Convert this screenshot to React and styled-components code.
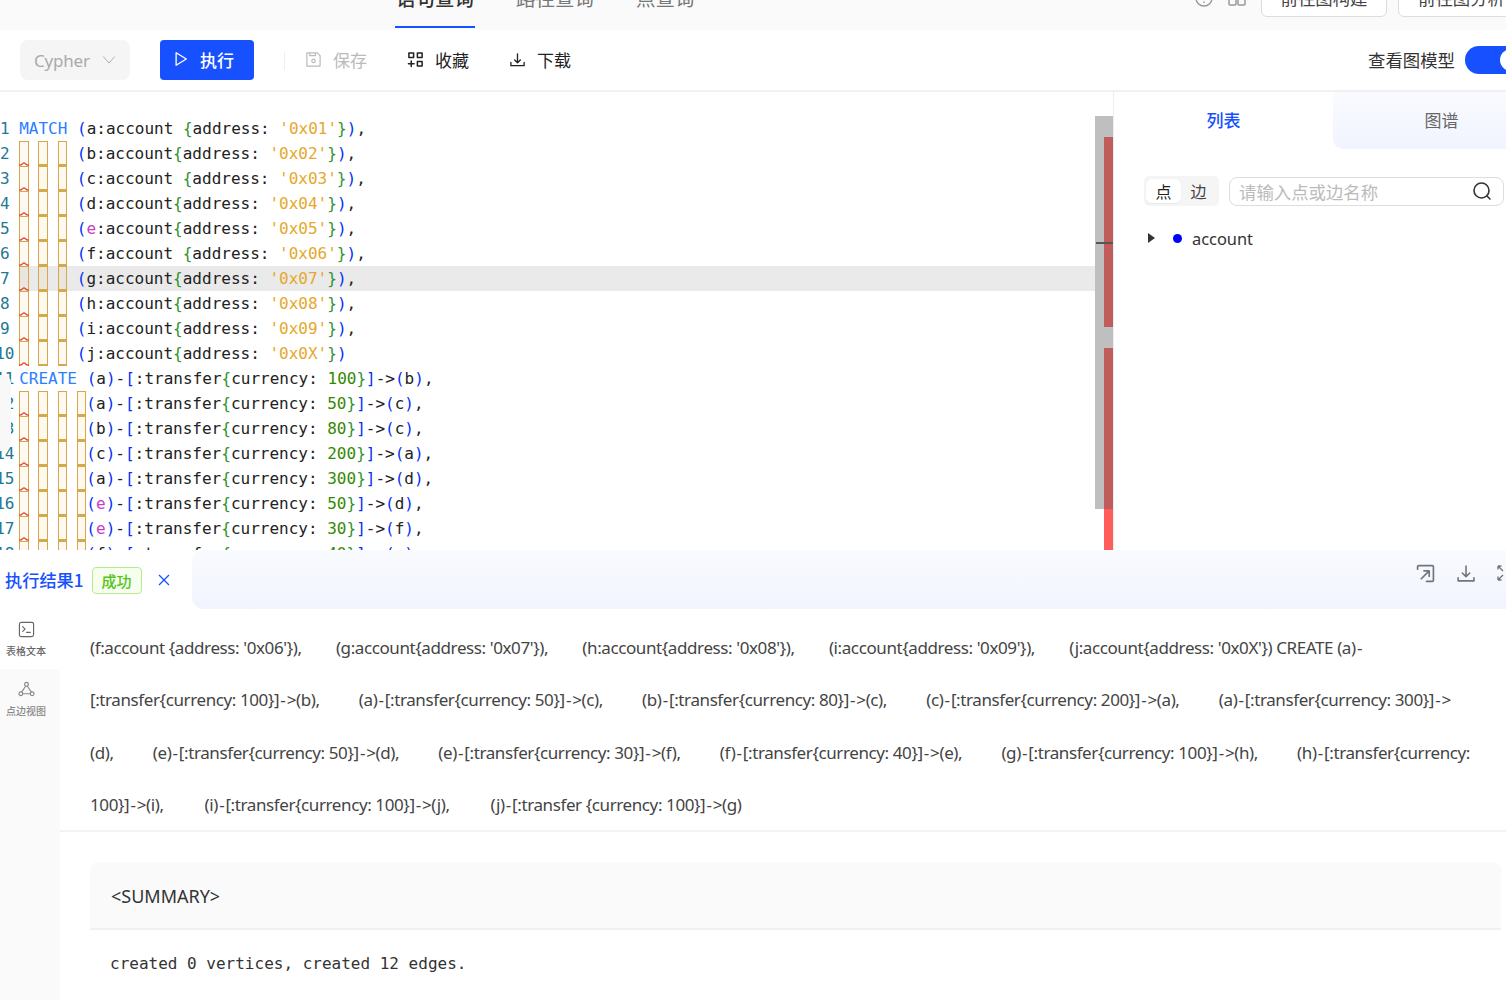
import React from 'react'
import styled, { createGlobalStyle } from 'styled-components'

const MONO = '"DejaVu Sans Mono", "Liberation Mono", monospace'
const UI = '"Noto Sans", "Noto Sans CJK SC", sans-serif'
const CJK = '"Noto Sans CJK SC", "Noto Sans", sans-serif'

const Global = createGlobalStyle`
  html, body { margin: 0; padding: 0; background: #fff; }
  * { box-sizing: border-box; }
  #root { width: 1506px; height: 1000px; overflow: hidden; font-family: ${UI}; }
`

const Page = styled.div`
  width: 1506px;
  height: 1000px;
  display: flex;
  flex-direction: column;
  overflow: hidden;
  background: #fff;
`

/* top bar, scrolled so only its lower edge is visible */
const TopBar = styled.div`
  height: 30px;
  flex: none;
  background: #fafafa;
  display: flex;
  justify-content: space-between;
  overflow: hidden;
`
const TopTabs = styled.div`
  display: flex;
  align-items: flex-start;
  gap: 40px;
  margin-left: 395px;
  margin-top: -16px;
`
const TopTab = styled.div`
  height: 44px;
  font-family: ${CJK};
  font-size: 19.5px;
  line-height: 28px;
  padding: 0 1px;
  font-weight: ${p => (p.$active ? 500 : 400)};
  color: ${p => (p.$active ? '#333' : '#777')};
  border-bottom: 2px solid ${p => (p.$active ? '#1650ff' : 'transparent')};
`
const TopActions = styled.div`
  display: flex;
  align-items: flex-start;
  margin-top: -16px;
  margin-right: -19px;
`
const TopIcon = styled.div`
  color: #999;
  margin-top: 5px;
  margin-right: 15px;
`
const TopButton = styled.div`
  height: 33px;
  width: ${p => p.$w}px;
  margin-left: ${p => p.$ml || 0}px;
  border: 1px solid #ddd;
  border-radius: 6px;
  background: #fff;
  font-family: ${CJK};
  font-size: 17.4px;
  line-height: 25px;
  text-align: center;
  color: #444;
`

const Toolbar = styled.div`
  height: 62px;
  flex: none;
  display: flex;
  align-items: center;
  padding: 0 0 2px 20px;
  border-bottom: 2px solid #f1f1f1;
  overflow: hidden;
`
const SelectBox = styled.div`
  width: 110px;
  height: 40px;
  margin-top: 2px;
  background: #f5f5f5;
  border-radius: 8px;
  display: flex;
  align-items: center;
  gap: 12px;
  padding: 0 0 0 14px;
  font-size: 17px;
  letter-spacing: -0.2px;
  color: #aaa;
`
const RunButton = styled.div`
  width: 94px;
  height: 40px;
  margin: 2px 0 0 30px;
  background: #1650ff;
  border-radius: 4px;
  color: #fff;
  display: flex;
  align-items: center;
  gap: 11px;
  padding: 0 0 2px 13px;
  font-family: ${CJK};
  font-size: 17px;
  font-weight: 500;
`
const ToolDivider = styled.div`
  width: 1px;
  height: 18px;
  margin: 4px 20px 0 30px;
  background: #eee;
`
const ToolAction = styled.div`
  display: flex;
  align-items: center;
  gap: 11px;
  margin-right: ${p => p.$mr}px;
  font-family: ${CJK};
  font-size: 17px;
  color: ${p => (p.$disabled ? '#bbb' : '#222')};
`
const ToolRight = styled.div`
  margin-left: auto;
  display: flex;
  align-items: center;
  gap: 10px;
  font-family: ${CJK};
  font-size: 17.4px;
  color: #333;
  margin-right: -19px;
`
const Switch = styled.div`
  width: 60px;
  height: 28px;
  margin-top: 2px;
  border-radius: 14px;
  background: #1650ff;
  position: relative;
  &::after {
    content: '';
    position: absolute;
    right: 3px;
    top: 3px;
    width: 22px;
    height: 22px;
    border-radius: 50%;
    background: #fff;
  }
`

const Workspace = styled.div`
  height: 458px;
  flex: none;
  display: flex;
  overflow: hidden;
`
const EditorPane = styled.div`
  width: 1113px;
  flex: none;
  position: relative;
  padding-top: 24px;
  overflow: hidden;
`
const CodeLine = styled.div`
  height: 25px;
  width: 1095px;
  display: flex;
  font-family: ${MONO};
  font-size: 16px;
  line-height: 25px;
  white-space: pre;
  color: #222;
`
const Gutter = styled.span`
  width: 9.6px;
  margin-right: 9.6px;
  flex: none;
  display: flex;
  justify-content: center;
  color: #237893;
`
const CodeBody = styled.span`
  flex: 1;
  display: flex;
  background: ${p => (p.$current ? '#eaeaea' : 'transparent')};
`
const GuideRow = styled.span`
  display: flex;
  flex: none;
  gap: 9.6px;
  padding-right: ${p => p.$pad}px;
`
const Guide = styled.span`
  position: relative;
  width: 9.6px;
  height: 25px;
  flex: none;
  background: rgba(232, 196, 110, 0.1);
  border: 1px solid #d4a84b;
  border-bottom-width: ${p => (p.$first ? 0 : 2)}px;
`
const Squiggle = styled.svg`
  position: absolute;
  left: -1px;
  bottom: 0;
`
const Token = styled.span`
  color: ${p => p.$c};
`
const GutterCover = styled.div`
  position: absolute;
  left: 0;
  top: 283px;
  width: 11px;
  height: 76px;
  background: #f8f8f8;
  border-radius: 0 8px 8px 0;
`
const ScrollTrack = styled.div`
  position: absolute;
  left: 1095px;
  top: 24px;
  width: 18px;
  height: 393px;
  background: #bfbfbf;
`
const ScrollMark = styled.div`
  position: absolute;
  left: 1104px;
  top: ${p => p.$top}px;
  width: 9px;
  height: ${p => p.$h}px;
  background: ${p => p.$c};
`
const ScrollTick = styled.div`
  position: absolute;
  left: 1096px;
  top: 150px;
  width: 17px;
  height: 2px;
  background: #555;
`

const SidePane = styled.div`
  flex: 1;
  border-left: 1px solid #eee;
  display: flex;
  flex-direction: column;
  overflow: hidden;
`
const SideTabs = styled.div`
  height: 57px;
  display: flex;
  flex: none;
`
const SideTab = styled.div`
  width: ${p => p.$w}px;
  flex: none;
  display: flex;
  align-items: center;
  justify-content: center;
  padding-bottom: 3px;
  font-family: ${CJK};
  font-size: 17px;
  font-weight: ${p => (p.$active ? 500 : 400)};
  color: ${p => (p.$active ? '#1650ff' : '#666')};
  background: ${p => (p.$active ? '#fff' : 'linear-gradient(180deg, #fafbff, #f1f4fe)')};
  border-radius: ${p => (p.$active ? '0' : '0 0 0 10px')};
`
const FilterRow = styled.div`
  display: flex;
  align-items: center;
  gap: 10px;
  margin: 27px 0 0 30px;
`
const Segmented = styled.div`
  width: 75px;
  height: 30px;
  background: #f5f5f5;
  border-radius: 5px;
  display: flex;
  padding: 3px 2px;
`
const Segment = styled.div`
  width: 35px;
  display: flex;
  align-items: center;
  justify-content: center;
  border-radius: 6px;
  font-family: ${CJK};
  font-size: 16px;
  color: ${p => (p.$active ? '#222' : '#444')};
  background: ${p => (p.$active ? '#fff' : 'transparent')};
  box-shadow: ${p => (p.$active ? '0 1px 2px rgba(0,0,0,.06)' : 'none')};
`
const SearchBox = styled.div`
  width: 275px;
  height: 29px;
  border: 1px solid #ddd;
  border-radius: 8px;
  display: flex;
  align-items: center;
  justify-content: space-between;
  padding: 0 11px 0 9px;
  font-family: ${CJK};
  font-size: 17.4px;
  color: #bbb;
`
const TreeRow = styled.div`
  display: flex;
  align-items: center;
  margin: 19px 0 0 34px;
  font-size: 16.4px;
  line-height: 26px;
  color: #333;
`
const TreeLabel = styled.span`
  position: relative;
  top: 1px;
`
const Dot = styled.span`
  width: 9px;
  height: 9px;
  border-radius: 50%;
  background: #0000ff;
  margin: 0 10px 0 18px;
`
const Caret = styled.span`
  width: 0;
  height: 0;
  border-left: 7px solid #333;
  border-top: 5px solid transparent;
  border-bottom: 5px solid transparent;
`

const ResultTabs = styled.div`
  height: 59px;
  flex: none;
  display: flex;
  background: #fff;
  position: relative;
`
const ResultTab = styled.div`
  width: 192px;
  flex: none;
  display: flex;
  align-items: center;
  padding: 0 0 1px 5px;
  font-family: ${CJK};
  font-size: 17.2px;
  font-weight: 500;
  color: #1650ff;
`
const SuccessTag = styled.span`
  width: 50px;
  height: 27px;
  margin: 2px 0 0 8px;
  display: flex;
  align-items: center;
  justify-content: center;
  border: 1px solid #b7eb8f;
  border-radius: 4px;
  background: #f6ffed;
  color: #52c41a;
  font-size: 15px;
`
const CloseMark = styled.span`
  margin: 1px 0 0 15px;
  display: flex;
`
const ResultBar = styled.div`
  flex: 1;
  display: flex;
  justify-content: flex-end;
  align-items: flex-start;
  padding: 14px 2px 0 0;
  background: linear-gradient(180deg, #fafbff, #f1f4fe);
  border-radius: 12px 0 0 12px;
  color: #71757f;
  & > svg + svg {
    margin-left: 21px;
  }
`
const ClippedExpand = styled.svg`
  margin-left: 22px !important;
`

const ResultBody = styled.div`
  flex: 1;
  display: flex;
  min-height: 0;
`
const SideNav = styled.div`
  width: 60px;
  flex: none;
  background: #fafafa;
  display: flex;
  flex-direction: column;
`
const NavItem = styled.div`
  height: 60px;
  display: flex;
  flex-direction: column;
  align-items: center;
  padding: 12px 8px 0 0;
  background: ${p => (p.$active ? '#fff' : 'transparent')};
  font-family: ${CJK};
  font-size: 10px;
  line-height: 14px;
  font-weight: 500;
  color: ${p => (p.$active ? '#666' : '#888')};
  gap: 6px;
`
const ResultMain = styled.div`
  flex: 1;
  min-width: 0;
`
const ResultText = styled.div`
  height: 223px;
  padding: 13px 0 0 30px;
  border-bottom: 2px solid #f3f3f3;
`
const TextRow = styled.div`
  height: 52.4px;
  display: flex;
  gap: ${p => p.$gap}px;
  font-size: 17px;
  letter-spacing: -0.4px;
  line-height: 52px;
  color: #444;
  white-space: nowrap;
`
const Hyphen = styled.span`
  padding: 0 1.2px;
`
const SummaryHead = styled.div`
  width: 1411px;
  height: 68px;
  margin: 30px 0 0 30px;
  padding-left: 21px;
  background: #fafafa;
  border-radius: 8px 8px 0 0;
  border-bottom: 2px solid #f0f0f0;
  font-size: 18px;
  line-height: 68px;
  color: #333;
`
const SummaryBody = styled.div`
  margin: 21px 0 0 50px;
  font-family: ${MONO};
  font-size: 16px;
  line-height: 26px;
  color: #333;
  white-space: pre;
`

const CODE = [
  "(a:account {address: '0x01'}),",
  "(b:account{address: '0x02'}),",
  "(c:account {address: '0x03'}),",
  "(d:account{address: '0x04'}),",
  "(e:account{address: '0x05'}),",
  "(f:account {address: '0x06'}),",
  "(g:account{address: '0x07'}),",
  "(h:account{address: '0x08'}),",
  "(i:account{address: '0x09'}),",
  "(j:account{address: '0x0X'})",
  "(a)-[:transfer{currency: 100}]->(b),",
  "(a)-[:transfer{currency: 50}]->(c),",
  "(b)-[:transfer{currency: 80}]->(c),",
  "(c)-[:transfer{currency: 200}]->(a),",
  "(a)-[:transfer{currency: 300}]->(d),",
  "(e)-[:transfer{currency: 50}]->(d),",
  "(e)-[:transfer{currency: 30}]->(f),",
  "(f)-[:transfer{currency: 40}]->(e),",
]

const RESULT_ROWS = [
  { gap: 34.3, items: ["(f:account {address: '0x06'}),", "(g:account{address: '0x07'}),", "(h:account{address: '0x08'}),", "(i:account{address: '0x09'}),", "(j:account{address: '0x0X'}) CREATE (a)-"] },
  { gap: 39.3, items: ['[:transfer{currency: 100}]->(b),', '(a)-[:transfer{currency: 50}]->(c),', '(b)-[:transfer{currency: 80}]->(c),', '(c)-[:transfer{currency: 200}]->(a),', '(a)-[:transfer{currency: 300}]->'] },
  { gap: 39.2, items: ['(d),', '(e)-[:transfer{currency: 50}]->(d),', '(e)-[:transfer{currency: 30}]->(f),', '(f)-[:transfer{currency: 40}]->(e),', '(g)-[:transfer{currency: 100}]->(h),', '(h)-[:transfer{currency:'] },
  { gap: 41, items: ['100}]->(i),', '(i)-[:transfer{currency: 100}]->(j),', '(j)-[:transfer {currency: 100}]->(g)'] },
]

// colours a code line the way the editor's bracket colouring does
function colorize(text) {
  const parts = text.match(/'[^']*'|\d+|\(e\)|\(e(?=:)|[(){}[\]]|[^'\d(){}[\]]+/g)
  return parts.map((part, i) => {
    if (part[0] === "'") return <Token key={i} $c="#e6a82c">{part}</Token>
    if (/^\d/.test(part)) return <Token key={i} $c="#338a00">{part}</Token>
    if (part === '(e)' || part === '(e') {
      return (
        <React.Fragment key={i}>
          <Token $c="#0431fa">(</Token>
          <Token $c="#c93cc9">e</Token>
          {part === '(e)' && <Token $c="#0431fa">)</Token>}
        </React.Fragment>
      )
    }
    if (part === '{' || part === '}') return <Token key={i} $c="#319331">{part}</Token>
    if ('()[]'.includes(part)) return <Token key={i} $c="#0431fa">{part}</Token>
    return <span key={i}>{part}</span>
  })
}

function EditorLine({ no, text }) {
  const keyword = no === 1 ? 'MATCH' : no === 11 ? 'CREATE' : null
  const guides = no === 1 || no === 11 ? 0 : no < 11 ? 3 : 4
  return (
    <CodeLine>
      <Gutter>{no}</Gutter>
      <CodeBody $current={no === 7}>
        {keyword && <Token $c="#2b7fff">{keyword} </Token>}
        {guides > 0 && (
          <GuideRow $pad={guides === 3 ? 9.6 : 0}>
            {Array.from({ length: guides }).map((_, i) => (
              <Guide key={i} $first={i === 0}>
                {i === 0 && (
                  <Squiggle width="10" height="4" viewBox="0 0 10 4">
                    <path d="M0 3.2 Q2.5 3.2 3.7 1.6 Q5 0 6.3 1.6 Q7.5 3.2 10 3.2" fill="none" stroke="#e5412d" strokeWidth="1.3" />
                  </Squiggle>
                )}
              </Guide>
            ))}
          </GuideRow>
        )}
        {colorize(text)}
      </CodeBody>
    </CodeLine>
  )
}

// hyphens sit wider in the result text than the font sets them
function spacedHyphens(text) {
  return text.split('-').map((part, i) => (
    <React.Fragment key={i}>
      {i > 0 && <Hyphen>-</Hyphen>}
      {part}
    </React.Fragment>
  ))
}

const Stroke = ({ size = 18, children, width = 1.5 }) => (
  <svg width={size} height={size} viewBox="0 0 18 18" fill="none" stroke="currentColor" strokeWidth={width} strokeLinecap="round" strokeLinejoin="round">
    {children}
  </svg>
)

export default function App() {
  return (
    <Page>
      <Global />
      <TopBar>
        <TopTabs>
          <TopTab $active>语句查询</TopTab>
          <TopTab>路径查询</TopTab>
          <TopTab>点查询</TopTab>
        </TopTabs>
        <TopActions>
          <TopIcon>
            <Stroke size={18}><circle cx="9" cy="9" r="8" /><path d="M9 5v5M9 13v.4" /></Stroke>
          </TopIcon>
          <TopIcon>
            <Stroke size={18}><rect x="1" y="2" width="7" height="14" rx="1" /><rect x="10" y="2" width="7" height="14" rx="1" /></Stroke>
          </TopIcon>
          <TopButton $w={126}>前往图构建</TopButton>
          <TopButton $w={127} $ml={11}>前往图分析</TopButton>
        </TopActions>
      </TopBar>

      <Toolbar>
        <SelectBox>
          Cypher
          <Stroke size={14} width={1.2}><path d="M2 5l7 8 7-8" /></Stroke>
        </SelectBox>
        <RunButton>
          <Stroke size={16}><path d="M3.5 2v14L15 9z" /></Stroke>
          执行
        </RunButton>
        <ToolDivider />
        <ToolAction $disabled $mr={40}>
          <Stroke size={17} width={1.3}>
            <path d="M2 2h11l3 3v11H2zM5 2v3h6V2" />
            <circle cx="9" cy="10.5" r="1.8" />
          </Stroke>
          保存
        </ToolAction>
        <ToolAction $mr={40}>
          <Stroke size={17} width={1.6}>
            <rect x="2" y="2" width="5" height="5" />
            <rect x="11" y="2" width="5" height="5" />
            <rect x="11" y="11" width="5" height="5" />
            <path d="M4.5 10.5v6M1.5 13.5h6" />
          </Stroke>
          收藏
        </ToolAction>
        <ToolAction $mr={0}>
          <Stroke size={17} width={1.4}><path d="M9 3v9M6 9.5L9 12.5l3-3M2 12v3.5h14V12" /></Stroke>
          下载
        </ToolAction>
        <ToolRight>
          查看图模型
          <Switch />
        </ToolRight>
      </Toolbar>

      <Workspace>
        <EditorPane>
          {CODE.map((text, i) => (
            <EditorLine key={i} no={i + 1} text={text} />
          ))}
          <GutterCover />
          <ScrollTrack />
          <ScrollMark $top={45} $h={190} $c="#c05c5c" />
          <ScrollMark $top={256} $h={161} $c="#c05c5c" />
          <ScrollMark $top={417} $h={41} $c="#ff5c5c" />
          <ScrollTick />
        </EditorPane>
        <SidePane>
          <SideTabs>
            <SideTab $w={219} $active>列表</SideTab>
            <SideTab $w={217}>图谱</SideTab>
          </SideTabs>
          <FilterRow>
            <Segmented>
              <Segment $active>点</Segment>
              <Segment>边</Segment>
            </Segmented>
            <SearchBox>
              请输入点或边名称
              <svg width="20" height="20" viewBox="0 0 20 20" fill="none" stroke="#333" strokeWidth="1.6" strokeLinecap="round">
                <circle cx="9.5" cy="9.5" r="7.5" />
                <path d="M15 15l3 3" />
              </svg>
            </SearchBox>
          </FilterRow>
          <TreeRow>
            <Caret />
            <Dot />
            <TreeLabel>account</TreeLabel>
          </TreeRow>
        </SidePane>
      </Workspace>

      <ResultTabs>
        <ResultTab>
          执行结果1
          <SuccessTag>成功</SuccessTag>
          <CloseMark>
            <svg width="14" height="14" viewBox="0 0 14 14" fill="none" stroke="#1650ff" strokeWidth="1.3">
              <path d="M2 2l10 10M12 2L2 12" />
            </svg>
          </CloseMark>
        </ResultTab>
        <ResultBar>
          <Stroke size={19} width={1.6}>
            <path d="M1.5 5V2.5a1 1 0 0 1 1-1h13a1 1 0 0 1 1 1v13a1 1 0 0 1-1 1H10M5 14l7-7M7.5 6.5h5v5" />
          </Stroke>
          <Stroke size={19} width={1.5}><path d="M9.5 2v10M6 8.5l3.5 3.5L13 8.5M2 13v3h15v-3" /></Stroke>
          <ClippedExpand width="7" height="18" viewBox="0 0 7 18" fill="none" stroke="currentColor" strokeWidth="1.4">
            <path d="M1 2l5 5M1 2h3.5M1 2v3.5M1 16l5-5M1 16h3.5M1 16v-3.5" />
          </ClippedExpand>
        </ResultBar>
      </ResultTabs>

      <ResultBody>
        <SideNav>
          <NavItem $active>
            <Stroke size={17} width={1.2}>
              <rect x="1.5" y="1.5" width="15" height="15" rx="2" />
              <path d="M5 6l2.5 2.5L5 11M9 12h4" />
            </Stroke>
            表格文本
          </NavItem>
          <NavItem>
            <Stroke size={17} width={1.2}>
              <circle cx="9" cy="3.5" r="2" />
              <circle cx="3" cy="13.5" r="2" />
              <circle cx="15" cy="13.5" r="2" />
              <path d="M8 5.5L4 11.5M10 5.5l4 6M5 13.5h8" />
            </Stroke>
            点边视图
          </NavItem>
        </SideNav>
        <ResultMain>
          <ResultText>
            {RESULT_ROWS.map((row, i) => (
              <TextRow key={i} $gap={row.gap}>
                {row.items.map((item, j) => (
                  <span key={j}>{spacedHyphens(item)}</span>
                ))}
              </TextRow>
            ))}
          </ResultText>
          <SummaryHead>&lt;SUMMARY&gt;</SummaryHead>
          <SummaryBody>created 0 vertices, created 12 edges.</SummaryBody>
        </ResultMain>
      </ResultBody>
    </Page>
  )
}
